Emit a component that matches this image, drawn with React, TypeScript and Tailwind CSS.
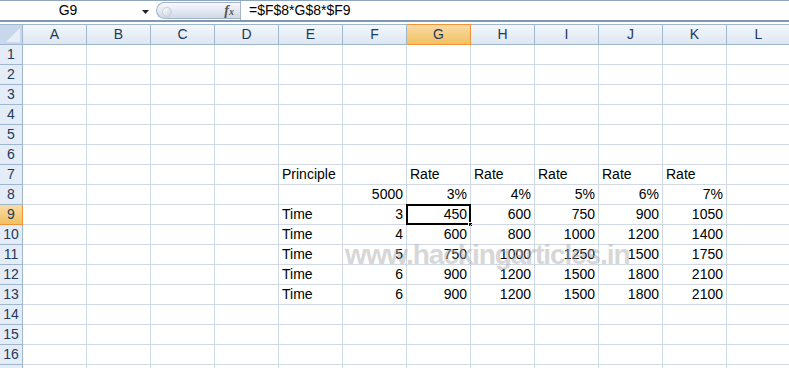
import React from "react";

const cols = ["A", "B", "C", "D", "E", "F", "G", "H", "I", "J", "K", "L"];

// sheet data, keyed by row -> column
const data: Record<number, Record<string, string>> = {
  7: { E: "Principle", G: "Rate", H: "Rate", I: "Rate", J: "Rate", K: "Rate" },
  8: { F: "5000", G: "3%", H: "4%", I: "5%", J: "6%", K: "7%" },
  9: { E: "Time", F: "3", G: "450", H: "600", I: "750", J: "900", K: "1050" },
  10: { E: "Time", F: "4", G: "600", H: "800", I: "1000", J: "1200", K: "1400" },
  11: { E: "Time", F: "5", G: "750", H: "1000", I: "1250", J: "1500", K: "1750" },
  12: { E: "Time", F: "6", G: "900", H: "1200", I: "1500", J: "1800", K: "2100" },
  13: { E: "Time", F: "6", G: "900", H: "1200", I: "1500", J: "1800", K: "2100" },
};

const rows = Array.from({ length: 17 }, (_, i) => i + 1);

function FormulaBar() {
  return (
    <div className="flex h-[24px] border-t border-[#8fa6c3] bg-white">
      <div className="flex h-[21px] w-full border-b-2 border-[#7f98b8]">
        <div className="relative flex w-[156px] items-center justify-center pr-[20px] text-[14px] text-black">
          G9
          <svg className="absolute right-[7px] top-[9px]" width="7" height="4" viewBox="0 0 7 4">
            <path d="M0 0 H7 L3.5 4 Z" fill="#222" />
          </svg>
        </div>
        <div className="relative my-[1px] flex w-[84px] items-center justify-end rounded-l-full border border-r-0 border-[#a3b4cc] bg-gradient-to-b from-[#f7f9fc] via-[#e3e9f2] to-[#cfd9e7] pr-[6px]">
          <div className="absolute left-[5px] top-[4px] h-[10px] w-[10px] rounded-full border border-[#c4cedb] bg-gradient-to-br from-white to-[#c9d3e0]" />
          <span className="font-['Liberation_Serif'] text-[14px] font-bold italic text-[#555]">
            f<span className="text-[10px]">x</span>
          </span>
        </div>
        <div className="flex items-center border-l border-[#a3b4cc] pl-[8px] text-[14px] text-black">
          =$F$8*G$8*$F9
        </div>
      </div>
    </div>
  );
}

function Corner() {
  return (
    <div className="relative h-[21px] border-t border-r border-b border-[#9eb6ce] bg-[#c8d7ec]">
      <svg className="absolute bottom-[2px] right-[2px]" width="14" height="14" viewBox="0 0 14 14">
        <path d="M14 0 V14 H0 Z" fill="#e8eef7" />
      </svg>
    </div>
  );
}

export default function App() {
  return (
    <div className="relative h-[368px] w-[789px] overflow-hidden bg-white font-['Liberation_Sans',sans-serif]">
      <FormulaBar />

      <div className="grid grid-cols-[23px_repeat(12,64px)]">
        <Corner />
        {cols.map((c) => (
          <div
            key={c}
            className={
              c === "G"
                ? "flex h-[21px] items-center justify-center border border-l-0 border-[#f29436] bg-gradient-to-b from-[#f9dba4] to-[#f1c15f] text-[14px] text-[#1e395b]"
                : "flex h-[21px] items-center justify-center border-t border-r border-b border-[#9eb6ce] bg-gradient-to-b from-[#f4f7fb] to-[#dde6f2] text-[14px] text-[#1e395b]"
            }
          >
            {c}
          </div>
        ))}

        {rows.map((r) => (
          <React.Fragment key={r}>
            <div
              className={
                r === 9
                  ? "flex h-[20px] items-center justify-center border-r border-b border-[#f29436] bg-gradient-to-b from-[#f9dba4] to-[#f1c15f] text-[14px] text-[#1e395b]"
                  : "flex h-[20px] items-center justify-center border-r border-b border-[#9eb6ce] bg-[#e4ecf7] text-[14px] text-[#1e395b]"
              }
            >
              {r < 17 ? r : ""}
            </div>
            {cols.map((c) => {
              const v = data[r]?.[c];
              const isText = v !== undefined && isNaN(parseFloat(v));
              const selected = r === 9 && c === "G";
              return (
                <div
                  key={c}
                  className={
                    "relative flex h-[20px] items-end border-r border-b border-[#d0d7e5] pb-[1px] text-[14px] leading-[17px] text-black " +
                    (isText ? "justify-start pl-[3px]" : "justify-end pr-[3px]")
                  }
                >
                  {v}
                  {selected && (
                    <>
                      <div className="absolute -left-[1px] -top-[1px] h-[21px] w-[65px] border-2 border-black" />
                      <div className="absolute -right-[3px] -bottom-[3px] h-[5px] w-[5px] border border-white bg-black" />
                    </>
                  )}
                </div>
              );
            })}
          </React.Fragment>
        ))}
      </div>

      {/* site watermark */}
      <div className="pointer-events-none absolute left-[345px] top-[234px] text-[28px] font-bold tracking-[-1.1px] text-[#a8a8a8] opacity-45">
        www.hackingarticles.in
      </div>
    </div>
  );
}
